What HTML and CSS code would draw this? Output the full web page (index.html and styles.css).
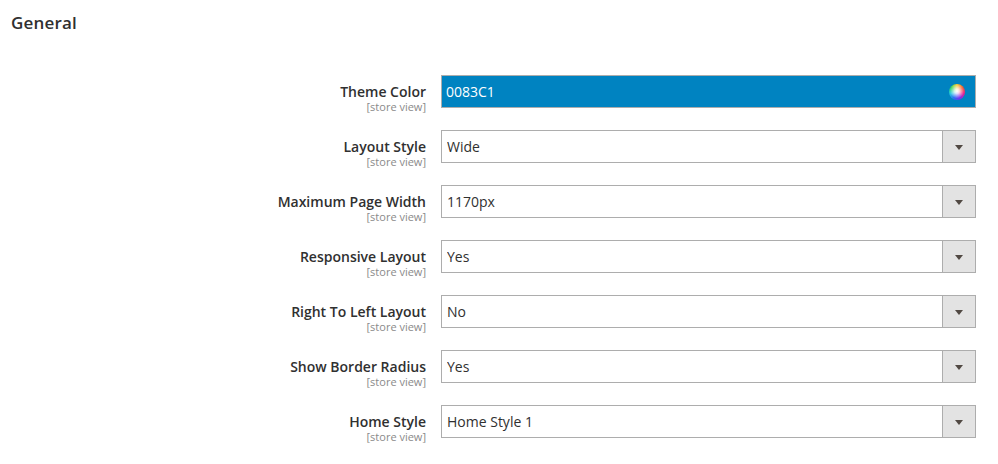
FILE: index.html
```html
<!DOCTYPE html>
<html lang="en">
<head>
    <meta charset="UTF-8">
    <meta name="viewport" content="width=device-width, initial-scale=1.0">
    <title>General</title>
    <link rel="stylesheet" href="styles.css">
</head>
<body>
    <h2 class="section-title">General</h2>

    <form class="config-form">
        <div class="form-row">
            <label class="field-label" for="themeColor">Theme Color<span class="scope">[store view]</span></label>
            <div class="color-field">
                <input type="text" id="themeColor" class="color-input" value="0083C1">
                <span class="color-wheel"></span>
            </div>
        </div>
        <div class="form-row">
            <label class="field-label" for="layoutStyle">Layout Style<span class="scope">[store view]</span></label>
            <div class="select-field">
                <select id="layoutStyle"><option>Wide</option><option>Boxed</option></select>
                <span class="select-arrow"></span>
            </div>
        </div>
        <div class="form-row">
            <label class="field-label" for="pageWidth">Maximum Page Width<span class="scope">[store view]</span></label>
            <div class="select-field">
                <select id="pageWidth"><option>1170px</option><option>1280px</option></select>
                <span class="select-arrow"></span>
            </div>
        </div>
        <div class="form-row">
            <label class="field-label" for="responsive">Responsive Layout<span class="scope">[store view]</span></label>
            <div class="select-field">
                <select id="responsive"><option>Yes</option><option>No</option></select>
                <span class="select-arrow"></span>
            </div>
        </div>
        <div class="form-row">
            <label class="field-label" for="rtl">Right To Left Layout<span class="scope">[store view]</span></label>
            <div class="select-field">
                <select id="rtl"><option>No</option><option>Yes</option></select>
                <span class="select-arrow"></span>
            </div>
        </div>
        <div class="form-row">
            <label class="field-label" for="borderRadius">Show Border Radius<span class="scope">[store view]</span></label>
            <div class="select-field">
                <select id="borderRadius"><option>Yes</option><option>No</option></select>
                <span class="select-arrow"></span>
            </div>
        </div>
        <div class="form-row">
            <label class="field-label" for="homeStyle">Home Style<span class="scope">[store view]</span></label>
            <div class="select-field">
                <select id="homeStyle"><option>Home Style 1</option><option>Home Style 2</option></select>
                <span class="select-arrow"></span>
            </div>
        </div>
    </form>
</body>
</html>
```

FILE: styles.css
```css
* {
    box-sizing: border-box;
}

body {
    margin: 0;
    padding: 0 22px 0 11px;
    background: #fff;
    color: #303030;
    font-family: "Open Sans", sans-serif;
    font-size: 14px;
}

.section-title {
    margin: 0;
    padding-top: 12px;
    height: 75px;
    font-size: 17px;
    line-height: 22px;
    font-weight: 600;
    letter-spacing: 0.2px;
    color: #303030;
}

.form-row {
    display: flex;
    align-items: flex-start;
    gap: 15px;
    height: 55px;
}

.field-label {
    width: 415px;
    padding-top: 7px;
    text-align: right;
    font-weight: 600;
    font-size: 14px;
    line-height: 19px;
}

.scope {
    display: block;
    font-size: 11px;
    line-height: 12px;
    font-weight: 400;
    color: #8a8a8a;
}

.color-field,
.select-field {
    flex: 1;
    display: flex;
    align-items: center;
    height: 33px;
    border: 1px solid #adadad;
}

.color-field {
    background: #0083c1;
    padding-right: 10px;
}

.color-input,
.select-field select {
    flex: 1;
    min-width: 0;
    height: 100%;
    padding: 0 4px;
    border: 0;
    outline: 0;
    background: transparent;
    font-family: inherit;
    font-size: 14px;
    appearance: none;
}

.color-input {
    color: #fff;
}

.select-field select {
    padding-left: 5px;
    color: #303030;
}

.color-wheel {
    width: 16px;
    height: 16px;
    border-radius: 50%;
    background:
        radial-gradient(circle at 50% 45%, #fff 0, rgba(255, 255, 255, 0.8) 20%, rgba(255, 255, 255, 0) 60%),
        conic-gradient(#f9c823, #f4562a, #e8208c, #7a2ff0, #2f6cf5, #25c8e0, #35d65a, #f9c823);
}

.select-arrow {
    position: relative;
    width: 33px;
    height: 100%;
    background: #e3e3e3;
    border-left: 1px solid #adadad;
}

.select-arrow::after {
    content: "";
    position: absolute;
    left: 12px;
    top: 14px;
    border-top: 5px solid #514943;
    border-left: 4px solid transparent;
    border-right: 4px solid transparent;
}
```
